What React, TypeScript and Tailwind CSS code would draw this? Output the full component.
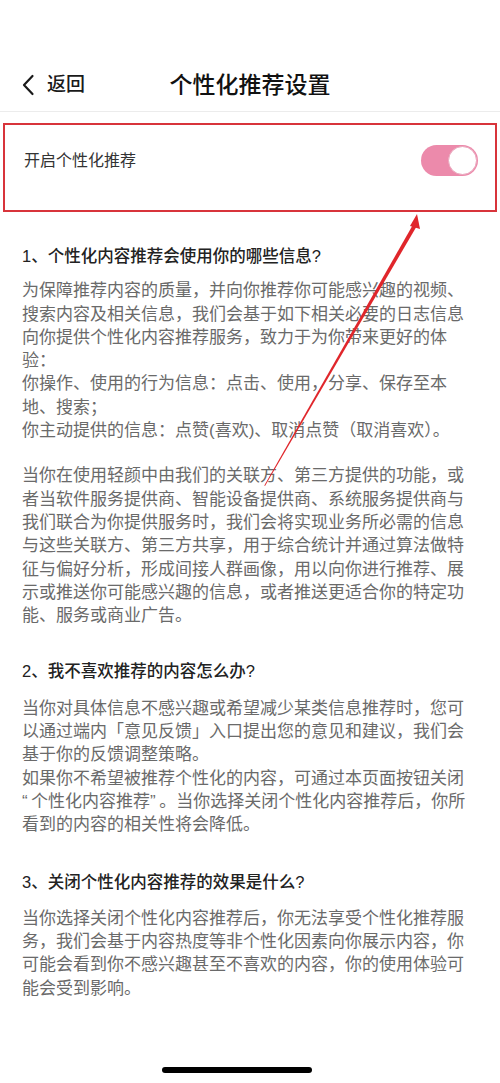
export default function App() {
  const font = { fontFamily: '"Liberation Sans", "Noto Sans CJK SC", sans-serif' };

  return (
    <div className="relative w-[500px] h-[1083px] bg-white overflow-hidden" style={font}>
      {/* header */}
      <div className="h-[112px] border-b border-[#ececec] pt-[62px]">
        <div className="relative h-[46px] flex items-center">
          <div className="flex items-center pl-[21px]">
            <svg width="14" height="22" viewBox="0 0 14 22" fill="none">
              <path d="M11.5 2 L3 11 L11.5 20" stroke="#1a1a1a" strokeWidth="2.2" strokeLinecap="round" strokeLinejoin="round" />
            </svg>
            <span className="ml-[12px] text-[19px] font-medium text-[#1a1a1a]">返回</span>
          </div>
          <div className="absolute inset-0 flex items-center justify-center pointer-events-none">
            <span className="text-[23px] font-medium text-[#111]">个性化推荐设置</span>
          </div>
        </div>
      </div>

      {/* highlighted switch row */}
      <div className="mx-[3px] mt-[11px] h-[89px] border-2 border-[#d8343b] pt-[19px]">
        <div className="flex items-center justify-between h-[33px] pl-[19px] pr-[17px]">
          <span className="text-[16px] text-[#333]">开启个性化推荐</span>
          <div className="w-[57px] h-[31px] rounded-full bg-[#ec8aab] flex items-center justify-end pr-[1px]">
            <div className="w-[29px] h-[29px] rounded-full bg-white border border-[#e9a6bc]" />
          </div>
        </div>
      </div>

      {/* content */}
      <div className="px-[22px] text-[17px] leading-[23.3px] text-[#6a6a6a]">
        <h2 className="mt-[33px] text-[16.5px] font-medium text-[#222] leading-[23.3px]">1、个性化内容推荐会使用你的哪些信息?</h2>
        <p className="mt-[11px]">
          为保障推荐内容的质量，并向你推荐你可能感兴趣的视频、搜索内容及相关信息，我们会基于如下相关必要的日志信息向你提供个性化内容推荐服务，致力于为你带来更好的体验：
          <br />
          你操作、使用的行为信息：点击、使用，分享、保存至本地、搜索；
          <br />
          你主动提供的信息：点赞(喜欢)、取消点赞（取消喜欢）。
        </p>
        <p className="mt-[22px]">
          当你在使用轻颜中由我们的关联方、第三方提供的功能，或者当软件服务提供商、智能设备提供商、系统服务提供商与我们联合为你提供服务时，我们会将实现业务所必需的信息与这些关联方、第三方共享，用于综合统计并通过算法做特征与偏好分析，形成间接人群画像，用以向你进行推荐、展示或推送你可能感兴趣的信息，或者推送更适合你的特定功能、服务或商业广告。
        </p>

        <h2 className="mt-[33px] text-[16.5px] font-medium text-[#222] leading-[23.3px]">2、我不喜欢推荐的内容怎么办?</h2>
        <p className="mt-[13px]">
          当你对具体信息不感兴趣或希望减少某类信息推荐时，您可以通过端内「意见反馈」入口提出您的意见和建议，我们会基于你的反馈调整策略。
          <br />
          如果你不希望被推荐个性化的内容，可通过本页面按钮关闭<wbr />“{'\u202F'}个性化内容推荐”{'\u202F'}。当你选择关闭个性化内容推荐后，你所
          <br />
          看到的内容的相关性将会降低。
        </p>

        <h2 className="mt-[34px] text-[16.5px] font-medium text-[#222] leading-[23.3px]">3、关闭个性化内容推荐的效果是什么?</h2>
        <p className="mt-[13px]">
          当你选择关闭个性化内容推荐后，你无法享受个性化推荐服务，我们会基于内容热度等非个性化因素向你展示内容，你可能会看到你不感兴趣甚至不喜欢的内容，你的使用体验可能会受到影响。
        </p>
      </div>

      {/* home indicator */}
      <div className="absolute bottom-[10px] left-[162px] w-[150px] h-[6px] rounded-full bg-black" />

      {/* annotation arrow */}
      <svg className="absolute left-0 top-0 pointer-events-none" width="500" height="1083" viewBox="0 0 500 1083">
        <polygon points="414.5,222 418,224 265,486 264.3,485.5" fill="#e0262b" />
        <polygon points="417,214 410,226 420,229" fill="#e0262b" />
      </svg>
    </div>
  );
}
